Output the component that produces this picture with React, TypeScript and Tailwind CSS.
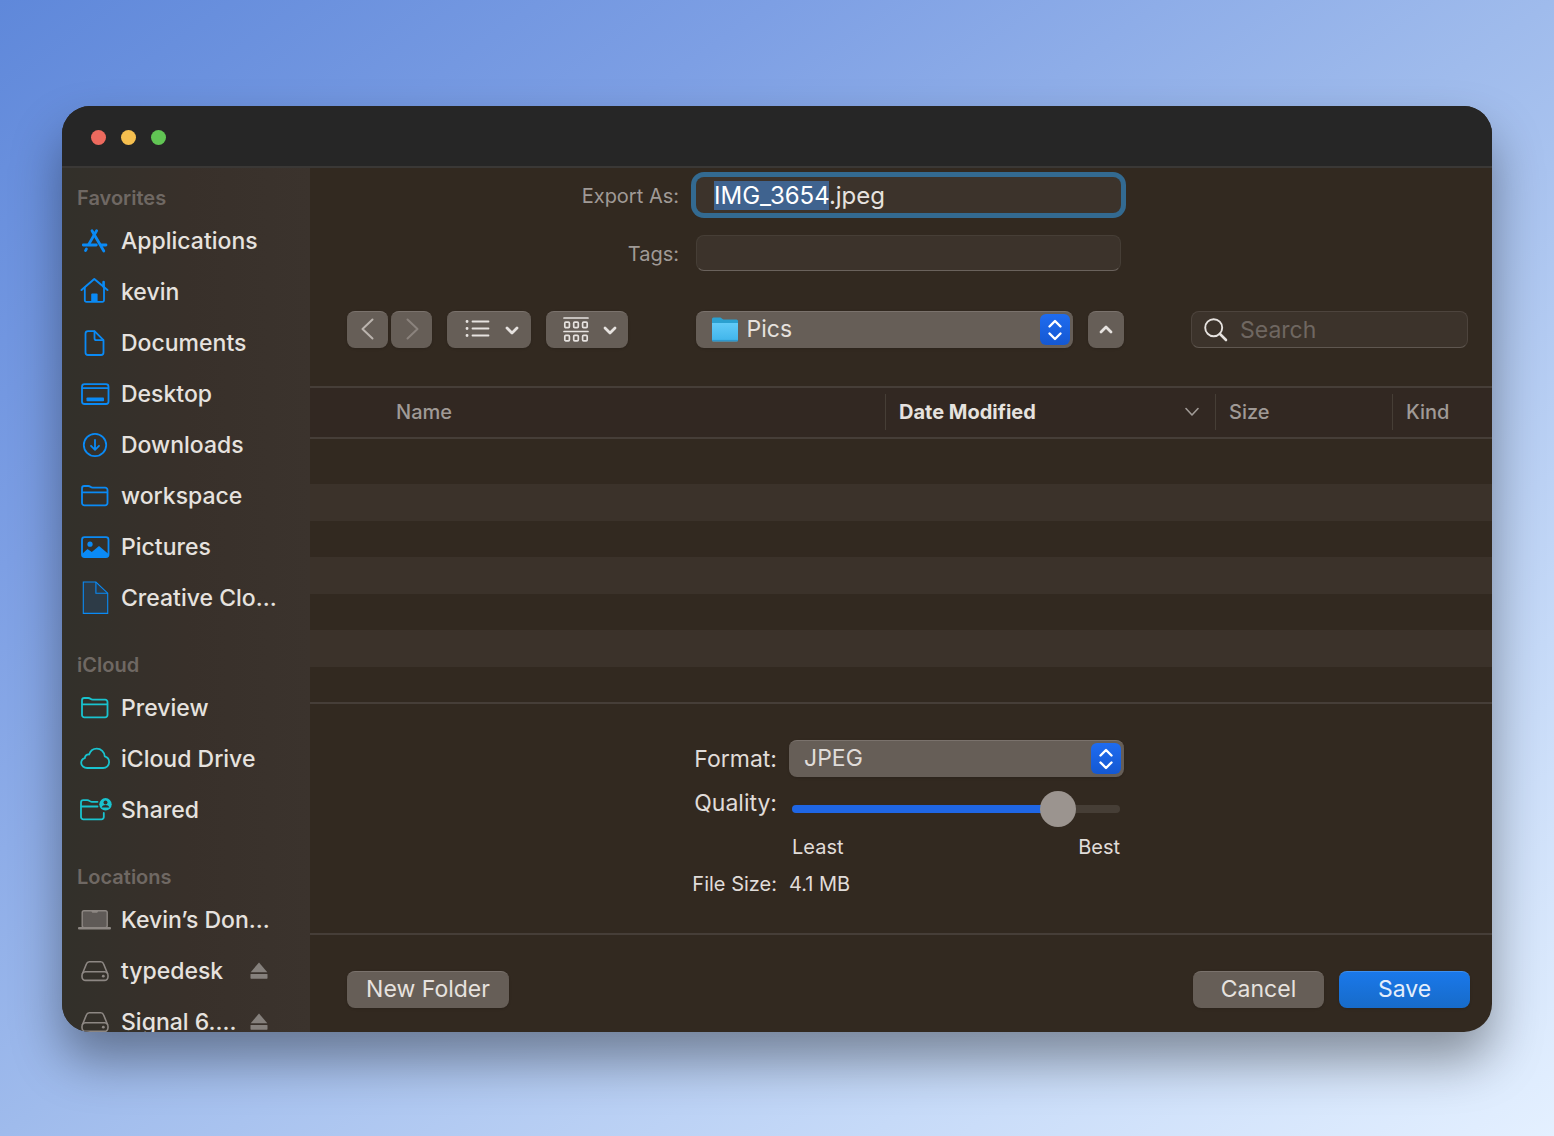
import { useEffect, useRef, useState } from "react";
import type { CSSProperties, ReactNode } from "react";

type SidebarItem = {
  label: string;
  icon: ReactNode;
  ejectable?: boolean;
};

type SidebarGroup = {
  title: string;
  color: string;
  items: SidebarItem[];
};

const Icon = ({ children }: { children: ReactNode }) => (
  <svg
    width="34"
    height="34"
    viewBox="0 0 34 34"
    fill="none"
    stroke="currentColor"
    strokeWidth="1.8"
    strokeLinecap="round"
    strokeLinejoin="round"
    className="shrink-0"
    aria-hidden="true"
  >
    {children}
  </svg>
);

const ApplicationsIcon = () => (
  <Icon>
    <g strokeWidth="2.8">
      <path d="M14 6.8 25.8 27" />
      <path d="M18.6 6.8 10.6 20.6" />
      <path d="M5.3 21h13M23.5 21h4.5" />
      <path d="M8.4 25 7.5 26.6" />
    </g>
  </Icon>
);

const HomeIcon = () => (
  <Icon>
    <path d="M3.5 15 16.3 4 29.5 15" strokeWidth="2" />
    <path d="M6.8 12.7v12.5a1.6 1.6 0 0 0 1.6 1.6h16a1.6 1.6 0 0 0 1.6-1.6V12.7" />
    <path d="M25.6 7v4.5" strokeWidth="2.6" />
    <path d="M13.2 27v-7.5a1 1 0 0 1 1-1h4.4a1 1 0 0 1 1 1V27z" fill="currentColor" stroke="none" />
  </Icon>
);

const DocumentIcon = () => (
  <Icon>
    <path d="M16.5 5.2H10a2.5 2.5 0 0 0-2.500 2.500v18.800a2.500 2.500 0 0 0 2.500 2.500h13a2.500 2.500 0 0 0 2.500-2.500V14.200z" />
    <path d="M16.500 5.500v6.700a2 2 0 0 0 2 2h6.700" />
  </Icon>
);

const DesktopIcon = () => (
  <Icon>
    <rect x="4" y="7.2" width="26.5" height="19.8" rx="2.5" />
    <path d="M4.5 11.2H30" />
    <rect x="8.5" y="20.5" width="17.5" height="3.8" rx="0.8" fill="currentColor" stroke="none" />
  </Icon>
);

const DownloadsIcon = () => (
  <Icon>
    <circle cx="17" cy="17" r="11.2" />
    <path d="M17 12v9.600M13 17.800l4 4 4-4" />
  </Icon>
);

const FolderIcon = () => (
  <Icon>
    <path d="M4 24V9.300A2.300 2.300 0 0 1 6.300 7h3.900c1 0 1.500.2 2.200.8.8.7 1.300.9 2.300.9h12.500a2.300 2.300 0 0 1 2.300 2.300v13a2.300 2.300 0 0 1-2.300 2.300H6.300A2.300 2.300 0 0 1 4 24z" />
    <path d="M4.500 13.300h24.800" />
  </Icon>
);

const PicturesIcon = () => (
  <Icon>
    <rect x="4" y="7.200" width="26.500" height="19.800" rx="2.500" />
    <circle cx="12" cy="14.200" r="2.600" fill="currentColor" stroke="none" />
    <path
      d="M4 24l5.500-4.900 4.300 2.800 7.200-6 9.500 8v1.600a2 2 0 0 1-2 1.500H6a2 2 0 0 1-2-1.500z"
      fill="currentColor"
      stroke="none"
    />
  </Icon>
);

const PlainFileIcon = () => (
  <Icon>
    <g strokeWidth="1.1" strokeLinejoin="miter" strokeLinecap="butt">
      <path d="M5.300 1h12.600l11.800 11.200v20.200H5.300z" fill="#2d3b47" />
      <path d="M17.900 1v11.200h11.800" />
    </g>
  </Icon>
);

const CloudIcon = () => (
  <Icon>
    <path d="M9.200 26c-3.300 0-6-2.200-6-5.100 0-2.500 1.600-4.200 3.600-4.800.2-2.400 2-3.900 4.300-3.600 1.300-3.500 4.200-5.800 7.600-5.800 4.400 0 7.700 3.200 8 7.600 2.600.7 4.400 2.900 4.400 5.700 0 3.400-2.700 6-6 6z" />
  </Icon>
);

const SharedFolderIcon = () => (
  <Icon>
    <path d="M19.500 8.800h-5.800c-1 0-1.500-.2-2.300-.9-.7-.6-1.200-.8-2.200-.8H5.300A2.300 2.300 0 0 0 3 9.400V24a2.300 2.300 0 0 0 2.300 2.300h18.200a2.300 2.300 0 0 0 2.300-2.300v-4" />
    <path d="M3.500 13.500h16" />
    <circle cx="27.500" cy="11.300" r="6.200" fill="currentColor" stroke="none" />
    <circle cx="27.500" cy="9.500" r="2" fill="#352e28" stroke="none" />
    <path d="M23.700 14.500c.6-1.600 2-2.400 3.800-2.400s3.200.8 3.800 2.400z" fill="#352e28" stroke="none" />
  </Icon>
);

const LaptopIcon = () => (
  <Icon>
    <rect x="4.200" y="7.800" width="25" height="16.800" rx="1.800" fill="#5f5a57" strokeWidth="1.400" />
    <path d="M13.500 8h6.500c0 1.200-.6 1.800-1.600 1.800h-3.300c-1 0-1.600-.6-1.600-1.800z" fill="currentColor" stroke="none" />
    <rect x="0" y="24" width="33" height="2.400" rx="1" fill="currentColor" stroke="none" />
  </Icon>
);

const DriveIcon = () => (
  <Icon>
    <g strokeWidth="1.600">
      <path d="M4.500 19.500l4-9.800a3 3 0 0 1 2.800-2h11.400a3 3 0 0 1 2.800 2l4 9.800" />
      <rect x="4" y="17.800" width="26" height="8.600" rx="3.600" />
    </g>
    <circle cx="25.300" cy="22.200" r="1.400" fill="currentColor" stroke="none" />
  </Icon>
);

const EjectIcon = () => (
  <svg width="18" height="18" viewBox="0 0 18 18" fill="currentColor" aria-hidden="true">
    <path d="M9 .5l8.300 9.700H.7z" />
    <rect x="0.500" y="12" width="17" height="4.700" rx="0.600" />
  </svg>
);

const ChevronIcon = ({ d }: { d: string }) => (
  <svg
    width="16"
    height="16"
    viewBox="0 0 16 16"
    fill="none"
    stroke="currentColor"
    strokeWidth="2.800"
    strokeLinecap="round"
    strokeLinejoin="round"
    aria-hidden="true"
  >
    <path d={d} />
  </svg>
);

const DOWN = "M3 6l5 5 5-5";
const UP = "M3 10l5-5 5 5";

const groups: SidebarGroup[] = [
  {
    title: "Favorites",
    color: "text-[#0a8af5]",
    items: [
      { label: "Applications", icon: <ApplicationsIcon /> },
      { label: "kevin", icon: <HomeIcon /> },
      { label: "Documents", icon: <DocumentIcon /> },
      { label: "Desktop", icon: <DesktopIcon /> },
      { label: "Downloads", icon: <DownloadsIcon /> },
      { label: "workspace", icon: <FolderIcon /> },
      { label: "Pictures", icon: <PicturesIcon /> },
      { label: "Creative Clo...", icon: <PlainFileIcon /> },
    ],
  },
  {
    title: "iCloud",
    color: "text-[#19c3cf]",
    items: [
      { label: "Preview", icon: <FolderIcon /> },
      { label: "iCloud Drive", icon: <CloudIcon /> },
      { label: "Shared", icon: <SharedFolderIcon /> },
    ],
  },
  {
    title: "Locations",
    color: "text-[#8d8783]",
    items: [
      { label: "Kevin’s Don...", icon: <LaptopIcon /> },
      { label: "typedesk", icon: <DriveIcon />, ejectable: true },
      { label: "Signal 6....", icon: <DriveIcon />, ejectable: true },
    ],
  },
];

const Sidebar = () => (
  <nav className="flex w-[248px] shrink-0 flex-col gap-[25px] overflow-hidden bg-linear-to-r from-[#32302a] via-[#38302a] to-[#3b332d] pt-[13px]">
    {groups.map((group) => (
      <section key={group.title} className="shrink-0">
        <h2 className="flex h-[34px] items-center pl-[15px] text-xl font-semibold text-[#6f6863]">
          {group.title}
        </h2>
        <ul>
          {group.items.map((item) => (
            <li key={item.label} className="flex h-[51px] items-center pr-[42px] pl-4">
              <a href="#" className="flex items-center gap-[9px] whitespace-nowrap">
                <span className={group.color}>{item.icon}</span>
                <span className="pt-[2px] text-[23px] font-medium text-[#e6e2df]">{item.label}</span>
              </a>
              {item.ejectable && (
                <button type="button" aria-label={`Eject ${item.label}`} className="ml-auto text-[#85807c]">
                  <EjectIcon />
                </button>
              )}
            </li>
          ))}
        </ul>
      </section>
    ))}
  </nav>
);

const ExportFields = () => {
  const inputRef = useRef<HTMLInputElement>(null);

  // select the base name only, so typing keeps the extension
  useEffect(() => {
    inputRef.current?.focus();
    inputRef.current?.setSelectionRange(0, 8);
  }, []);

  return (
    <div className="grid grid-cols-[1fr_425px_1fr] items-center gap-y-[22px] pt-[9px] pl-[15px] text-[#a09a96]">
      <label htmlFor="export-as" className="pt-[2px] pr-[17px] text-right text-xl">
        Export As:
      </label>
      <input
        id="export-as"
        ref={inputRef}
        defaultValue="IMG_3654.jpeg"
        spellCheck={false}
        className="h-9 rounded-lg bg-[#3c332b] px-[18px] text-2xl text-[#e6e2df] ring-[5px] ring-[#336a91] outline-none selection:bg-[#3f638f] selection:text-white"
      />
      <span />
      <label htmlFor="tags" className="pt-[2px] pr-[17px] text-right text-xl">
        Tags:
      </label>
      <input
        id="tags"
        className="h-9 rounded-lg border border-[#463e36] border-b-[#6a625c] bg-[#3c332b] px-4 text-[23px] outline-none"
      />
    </div>
  );
};

const toolButton =
  "flex h-[37px] items-center justify-center rounded-lg border-t border-[#7a726c] bg-[#665e57] text-[#e6e2df] shadow-sm";

const Stepper = () => (
  <span className="pointer-events-none absolute top-[3px] right-[3px] flex h-[31px] w-[30px] items-center justify-center rounded-md bg-linear-to-b from-[#1f6cf0] to-[#1458d2] text-white">
    <svg
      width="16"
      height="24"
      viewBox="0 0 16 24"
      fill="none"
      stroke="currentColor"
      strokeWidth="2.400"
      strokeLinecap="round"
      strokeLinejoin="round"
      aria-hidden="true"
    >
      <path d="M2.500 8.500 8 3l5.500 5.500M2.500 15.500 8 21l5.500-5.500" />
    </svg>
  </span>
);

const Toolbar = () => (
  <div className="flex items-center justify-between pt-10 pr-6 pl-[37px]">
    <div className="flex">
      <button type="button" aria-label="Back" className={`${toolButton} w-[41px] pb-[2px]`}>
        <svg width="14" height="22" viewBox="0 0 14 22" fill="none" stroke="#bbb4ae" strokeWidth="2" strokeLinecap="round" strokeLinejoin="round">
          <path d="M11.500 1.500 1.500 11l10 9.500" />
        </svg>
      </button>
      <button type="button" aria-label="Forward" className={`${toolButton} ml-[3px] w-[41px] pb-[2px]`}>
        <svg width="14" height="22" viewBox="0 0 14 22" fill="none" stroke="#8b837d" strokeWidth="2" strokeLinecap="round" strokeLinejoin="round">
          <path d="M2.500 1.500l10 9.500-10 9.500" />
        </svg>
      </button>
      <button type="button" aria-label="List view" className={`${toolButton} ml-[15px] w-[84px] gap-[14px] pl-[6px]`}>
        <svg width="26" height="20" viewBox="0 0 26 20" fill="none" stroke="currentColor" strokeWidth="1.800" strokeLinecap="round">
          <path d="M8.500 1.500h16M8.500 8.500h16M8.500 15.500h16" />
          <path d="M3 1.500h.1M3 8.500h.1M3 15.500h.1" strokeWidth="2.800" />
        </svg>
        <ChevronIcon d={DOWN} />
      </button>
      <button type="button" aria-label="Group items" className={`${toolButton} ml-[15px] w-[82px] gap-[13px] pl-[6px]`}>
        <svg width="26" height="26" viewBox="0 0 26 26" fill="none" stroke="currentColor" strokeWidth="1.700" strokeLinecap="round">
          <path d="M1 1h24M1 14.500h24" />
          <rect x="1.800" y="5.200" width="4.600" height="5.400" rx="1" />
          <rect x="10.700" y="5.200" width="4.600" height="5.400" rx="1" />
          <rect x="19.600" y="5.200" width="4.600" height="5.400" rx="1" />
          <rect x="1.800" y="18.400" width="4.600" height="5.400" rx="1" />
          <rect x="10.700" y="18.400" width="4.600" height="5.400" rx="1" />
          <rect x="19.600" y="18.400" width="4.600" height="5.400" rx="1" />
        </svg>
        <ChevronIcon d={DOWN} />
      </button>
    </div>

    <div className="flex gap-[15px]">
      <div className="relative w-[377px]">
        <select
          aria-label="Folder"
          className="h-[37px] w-full appearance-none rounded-lg border-t border-[#7a726c] bg-[#665e57] pb-[2px] pl-[51px] text-[23px] text-[#e6e2df] shadow-sm outline-none"
        >
          <option>Pics</option>
        </select>
        <svg width="28" height="26" viewBox="0 0 28 26" className="pointer-events-none absolute top-[6px] left-[15px]" aria-hidden="true">
          <defs>
            <linearGradient id="folder-front" x1="0" y1="0" x2="0" y2="1">
              <stop offset="0" stopColor="#62cbf8" />
              <stop offset="1" stopColor="#3fb4ea" />
            </linearGradient>
          </defs>
          <path d="M1 2a1.500 1.500 0 0 1 1.500-1.500h6.500c1.500 0 2 1.900 3.500 1.900h13A1.500 1.500 0 0 1 27 3.900V8H1z" fill="#2ba0d0" />
          <path d="M1 6h26v17a1.500 1.500 0 0 1-1.500 1.500h-23A1.500 1.500 0 0 1 1 23z" fill="url(#folder-front)" />
          <path d="M1 23.500h26" stroke="#2f97cc" strokeWidth="1.200" />
        </svg>
        <Stepper />
      </div>
      <button type="button" aria-label="Collapse browser" className={`${toolButton} w-9`}>
        <ChevronIcon d={UP} />
      </button>
    </div>

    <label className="flex h-[37px] w-[277px] items-center gap-3 rounded-lg border border-[#4d443d] border-b-[#5f5750] bg-[#3c332b] pl-3">
      <svg width="24" height="24" viewBox="0 0 24 24" fill="none" stroke="#e6e2df" strokeLinecap="round" className="shrink-0" aria-hidden="true">
        <circle cx="9.700" cy="9.700" r="8.500" strokeWidth="1.900" />
        <path d="M16 16l6 6" strokeWidth="2.600" />
      </svg>
      <input
        type="search"
        aria-label="Search"
        placeholder="Search"
        className="w-full min-w-0 bg-transparent pt-[2px] text-[23px] text-[#e6e2df] outline-none placeholder:text-[#6f6761]"
      />
    </label>
  </div>
);

const headCell = "text-left font-medium text-[#a09a96]";
const headLabel = "flex h-9 items-center border-l border-[#463e36] pl-[13px]";

const FileList = () => (
  <div className="mt-[38px] min-h-0 flex-1 overflow-hidden border-y-2 border-[#463e38]">
    <table className="w-full table-fixed border-collapse text-xl">
      <colgroup>
        <col />
        <col className="w-[330px]" />
        <col className="w-[177px]" />
        <col className="w-[100px]" />
      </colgroup>
      <thead>
        <tr className="h-[50px] border-b-2 border-[#463e38] bg-[#322822]">
          <th scope="col" className={`${headCell} pb-[2px] pl-[86px]`}>
            Name
          </th>
          <th scope="col" className="pb-[2px] text-left font-bold text-[#e6e2df]" aria-sort="descending">
            <span className={`${headLabel} justify-between pr-4`}>
              Date Modified
              <svg width="14" height="10" viewBox="0 0 14 10" fill="none" stroke="#a09a96" strokeWidth="1.600" strokeLinecap="round" strokeLinejoin="round">
                <path d="M1 1.500 7 8l6-6.500" />
              </svg>
            </span>
          </th>
          <th scope="col" className={`${headCell} pb-[2px]`}>
            <span className={headLabel}>Size</span>
          </th>
          <th scope="col" className={`${headCell} pb-[2px]`}>
            <span className={headLabel}>Kind</span>
          </th>
        </tr>
      </thead>
      <tbody>
        <tr className="h-[10px]">
          <td colSpan={4} />
        </tr>
        {[0, 1, 2, 3, 4, 5].map((row) => (
          <tr key={row} className="even:h-9 odd:h-[37px] odd:bg-[#3b322a]">
            <td colSpan={4} />
          </tr>
        ))}
      </tbody>
    </table>
  </div>
);

const FormatOptions = () => {
  const [quality, setQuality] = useState(85);
  const fill = { "--fill": `${quality}%` } as CSSProperties;

  return (
    <div className="grid grid-cols-[1fr_335px_1fr] pt-9 pb-[31px] pl-[111px] text-[#e0dcd9]">
      <label htmlFor="format" className="flex h-[37px] items-center justify-end pt-[2px] pr-3 text-[23px]">
        Format:
      </label>
      <div className="relative">
        <select
          id="format"
          className="h-[37px] w-full appearance-none rounded-lg border-t border-[#7a726c] bg-[#665e57] pb-[2px] pl-[15px] text-[23px] shadow-sm outline-none"
        >
          <option>JPEG</option>
          <option>HEIC</option>
          <option>PNG</option>
        </select>
        <Stepper />
      </div>
      <span />

      <label htmlFor="quality" className="flex h-[52px] items-center justify-end pr-3 text-[23px]">
        Quality:
      </label>
      <div className="flex items-start pt-[14px] pr-1 pl-[3px]">
        <input
          id="quality"
          type="range"
          min="0"
          max="100"
          value={quality}
          onChange={(e) => setQuality(Number(e.target.value))}
          style={fill}
          className="h-9 w-full appearance-none bg-transparent [&::-webkit-slider-runnable-track]:h-2 [&::-webkit-slider-runnable-track]:rounded-full [&::-webkit-slider-runnable-track]:bg-[linear-gradient(to_right,#1f66e5_var(--fill),#463e36_var(--fill))] [&::-webkit-slider-thumb]:-mt-[14px] [&::-webkit-slider-thumb]:h-9 [&::-webkit-slider-thumb]:w-9 [&::-webkit-slider-thumb]:appearance-none [&::-webkit-slider-thumb]:rounded-full [&::-webkit-slider-thumb]:bg-[#9b948f]"
        />
      </div>
      <span />

      <span />
      <div className="flex h-9 items-center justify-between pr-1 pl-[3px] text-xl">
        <span>Least</span>
        <span>Best</span>
      </div>
      <span />

      <span className="flex h-[37px] items-center justify-end pr-3 text-xl">File Size:</span>
      <span className="flex h-[37px] items-center text-xl">4.1 MB</span>
    </div>
  );
};

const Footer = () => (
  <div className="flex gap-[15px] border-t-2 border-[#463e38] pt-9 pr-[22px] pb-6 pl-[37px] text-[23px]">
    <button type="button" className={`${toolButton} mr-auto w-[162px] pb-[2px]`}>
      New Folder
    </button>
    <button type="button" className={`${toolButton} w-[131px] pb-[2px]`}>
      Cancel
    </button>
    <button
      type="submit"
      className="flex h-[37px] w-[131px] items-center justify-center rounded-lg border-t border-[#3d8ff0] bg-linear-to-b from-[#1a78ea] to-[#176bc9] pb-[2px] text-[#e4eefb] shadow-sm"
    >
      Save
    </button>
  </div>
);

export default function App() {
  return (
    <div className="flex h-screen bg-[linear-gradient(to_bottom_right,#5f88da_0%,#7d9fe4_25%,#9fbbec_50%,#c6daf8_78%,#e4f0ff_100%)] px-[62px] pt-[106px] pb-[104px] font-['Inter','Liberation_Sans',sans-serif]">
      <div className="flex min-w-0 flex-1 flex-col overflow-hidden rounded-[28px] bg-[#322920] shadow-[0_28px_50px_rgba(0,0,0,0.38)]">
        <header className="flex h-[62px] shrink-0 items-center gap-[15px] border-b-2 border-[#3a3836] bg-[#262626] pt-[2px] pl-[29px]">
          <button type="button" aria-label="Close" className="h-[15px] w-[15px] rounded-full bg-[#ed6a5e]" />
          <button type="button" aria-label="Minimize" className="h-[15px] w-[15px] rounded-full bg-[#f5bf4f]" />
          <button type="button" aria-label="Zoom" className="h-[15px] w-[15px] rounded-full bg-[#61c554]" />
        </header>
        <div className="flex min-h-0 flex-1">
          <Sidebar />
          <main className="flex min-w-0 flex-1 flex-col">
            <ExportFields />
            <Toolbar />
            <FileList />
            <FormatOptions />
            <Footer />
          </main>
        </div>
      </div>
    </div>
  );
}
